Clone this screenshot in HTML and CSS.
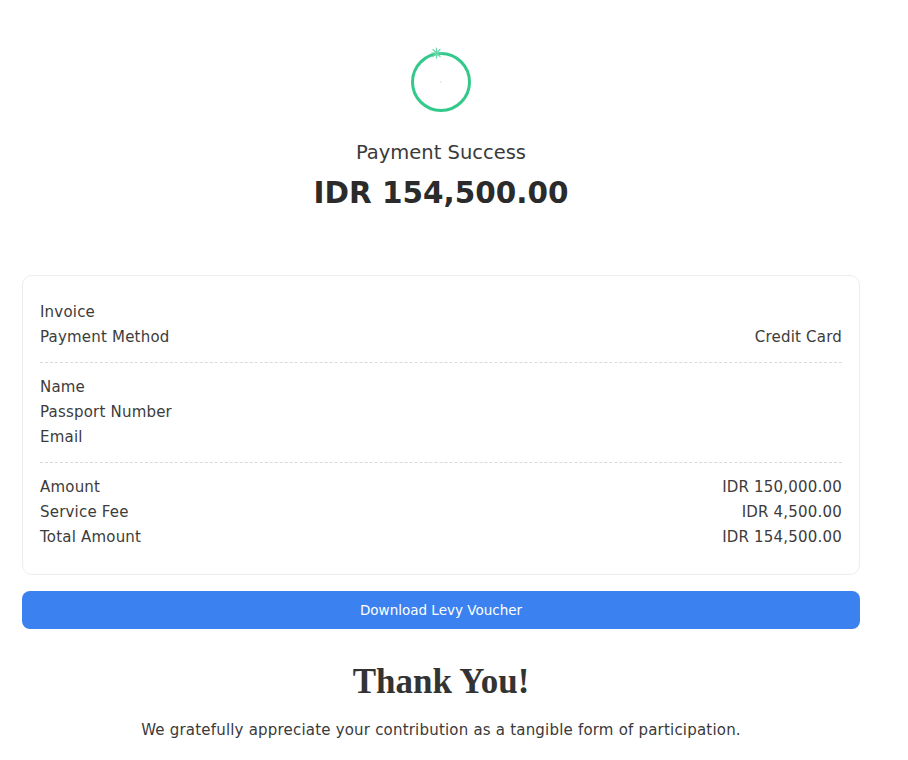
FILE: index.html
```html
<!DOCTYPE html>
<html lang="en">

<head>
    <meta charset="UTF-8">
    <meta name="viewport" content="width=device-width, initial-scale=1.0">
    <title>Payment Success</title>
    <link rel="stylesheet" href="styles.css">
</head>

<body>
    <div class="container">
        <div class="header">
            <svg class="success-icon" width="64" height="64" viewBox="0 0 64 64">
                <circle cx="32" cy="32" r="28.5" fill="none" stroke="#33c98b" stroke-width="3" />
                <g stroke="#6ad8a9" stroke-width="1.2" stroke-linecap="round">
                    <line x1="27.5" y1="-2" x2="27.5" y2="8" />
                    <line x1="22.5" y1="3" x2="32.5" y2="3" />
                    <line x1="24" y1="-0.5" x2="31" y2="6.5" />
                    <line x1="31" y1="-0.5" x2="24" y2="6.5" />
                </g>
                <circle cx="32" cy="32" r="0.8" fill="#d6d6d6" />
            </svg>
            <div class="title">Payment Success</div>
            <div class="amount">IDR 154,500.00</div>
        </div>

        <div class="card">
            <div class="row"><span>Invoice</span><span></span></div>
            <div class="row"><span>Payment Method</span><span>Credit Card</span></div>
            <div class="divider"></div>
            <div class="row"><span>Name</span><span></span></div>
            <div class="row"><span>Passport Number</span><span></span></div>
            <div class="row"><span>Email</span><span></span></div>
            <div class="divider"></div>
            <div class="row"><span>Amount</span><span>IDR 150,000.00</span></div>
            <div class="row"><span>Service Fee</span><span>IDR 4,500.00</span></div>
            <div class="row"><span>Total Amount</span><span>IDR 154,500.00</span></div>
        </div>

        <button type="button" class="download-btn">Download Levy Voucher</button>

        <h2 class="thanks">Thank You!</h2>
        <p class="note">We gratefully appreciate your contribution as a tangible form of participation.</p>
    </div>
</body>

</html>
```

FILE: styles.css
```css
body {
    margin: 0;
    background: #fff;
    font-family: "DejaVu Sans", "Open Sans", sans-serif;
    color: #333;
}

.container {
    width: 838px;
    margin-left: 22px;
    padding-top: 50px;
    display: flex;
    flex-direction: column;
}

.header {
    display: flex;
    flex-direction: column;
    align-items: center;
}

.success-icon {
    display: block;
    overflow: visible;
}

.title {
    margin-top: 27px;
    font-size: 19.5px;
    line-height: 24px;
    color: #3a3a3a;
}

.amount {
    margin-top: 8px;
    font-size: 29.5px;
    line-height: 40px;
    font-weight: 700;
    color: #2b2b2b;
}

.card {
    margin-top: 62px;
    border: 1px solid #ededed;
    border-radius: 10px;
    padding: 24px 17px 24px 17px;
}

.row {
    display: flex;
    justify-content: space-between;
    font-size: 15px;
    letter-spacing: 0.2px;
    line-height: 25px;
    color: #3c3c3c;
}

.divider {
    border-top: 1px dashed #dadada;
    margin: 12px 0 12px;
}

.download-btn {
    margin-top: 16px;
    height: 38px;
    border: 0;
    border-radius: 8px;
    background: #3b82f0;
    color: #fff;
    font-family: inherit;
    font-size: 13.5px;
}

.thanks {
    margin: 31px 0 0;
    text-align: center;
    font-family: "Liberation Serif", "DejaVu Serif", serif;
    font-size: 35px;
    line-height: 44px;
    font-weight: 700;
    color: #333;
}

.note {
    margin: 15px 0 0;
    text-align: center;
    font-size: 15px;
    letter-spacing: 0.2px;
    line-height: 22px;
    color: #3a3a3a;
}
```
